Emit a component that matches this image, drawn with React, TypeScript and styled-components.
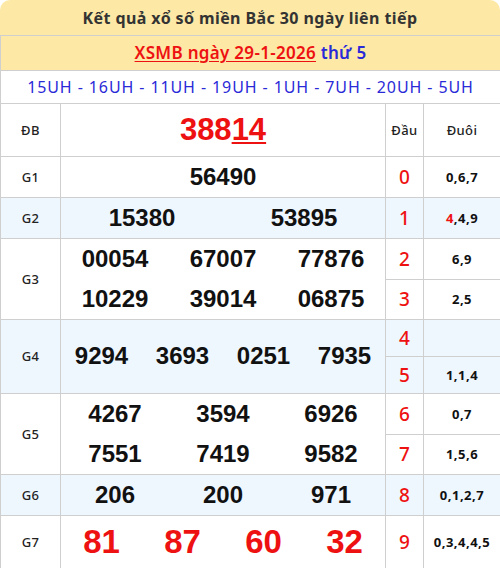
import React from "react";
import styled, { createGlobalStyle } from "styled-components";

const Global = createGlobalStyle`
  html, body { margin: 0; padding: 0; background: #fff; }
  body { font-family: "Noto Sans", "DejaVu Sans", sans-serif; }
`;

const YELLOW = "#fde9a5";
const BLUE_BG = "#eef6fe";
const LINE = "#cfcfcf";
const RED = "#ee1111";
const BLUE = "#2a2ad8";

const Wrap = styled.div`
  width: 500px;
`;

const Title = styled.div`
  height: 35px;
  background: ${YELLOW};
  border-radius: 10px 10px 0 0;
  border-bottom: 1px solid ${LINE};
  display: flex;
  align-items: center;
  justify-content: center;
  font-size: 16px;
  font-weight: 700;
  letter-spacing: 0.4px;
  color: #333;
`;

const Table = styled.table`
  width: 500px;
  border-collapse: collapse;
  table-layout: fixed;
`;

const Row = styled.tr<{ $alt?: boolean; $h: number }>`
  background: ${(p) => (p.$alt ? BLUE_BG : "#fff")};
  height: ${(p) => p.$h}px;
`;

const Cell = styled.td`
  border: 1px solid ${LINE};
  padding: 0;
  text-align: center;
  vertical-align: middle;
`;

const DateCell = styled(Cell)`
  background: ${YELLOW};
  border-top: none;
  font-size: 17px;
  font-weight: 600;
  letter-spacing: 0.3px;
`;

const DateLink = styled.span`
  color: ${RED};
  text-decoration: underline;
  text-underline-offset: 2px;
`;

const Weekday = styled.span`
  color: ${BLUE};
`;

const CodeCell = styled(Cell)`
  font-size: 16px;
  color: ${BLUE};
  letter-spacing: 0.9px;
`;

const Label = styled(Cell)`
  font-size: 13px;
  font-weight: 500;
  letter-spacing: 0.4px;
  color: #222;
`;

const HeadTitle = styled(Cell)`
  font-size: 13px;
  font-weight: 500;
  letter-spacing: 0.4px;
  color: #222;
`;

const Head = styled(Cell)`
  font-size: 19px;
  font-weight: 500;
  color: ${RED};
`;

const Tail = styled(Cell)`
  font-size: 13px;
  font-weight: 700;
  letter-spacing: 0.5px;
  color: #111;
`;

const Hl = styled.span`
  color: ${RED};
`;

const NumCell = styled(Cell)``;

const Line = styled.div<{ $h?: number }>`
  display: flex;
  align-items: center;
  height: ${(p) => (p.$h ? `${p.$h}px` : "auto")};
`;

const Num = styled.span<{ $size: number; $red?: boolean }>`
  flex: 1;
  text-align: center;
  font-family: "Liberation Sans", Arial, sans-serif;
  font-weight: 700;
  font-size: ${(p) => p.$size}px;
  color: ${(p) => (p.$red ? RED : "#111")};
`;

const Special = styled.span`
  font-family: "Liberation Sans", Arial, sans-serif;
  font-weight: 700;
  font-size: 31px;
  color: ${RED};
`;

const Under = styled.span`
  text-decoration: underline;
  text-decoration-thickness: 2px;
  text-underline-offset: 2px;
`;

const Nums = ({ items, size = 24, red, h }: { items: string[]; size?: number; red?: boolean; h?: number }) => (
  <Line $h={h}>
    {items.map((n, i) => (
      <Num key={i} $size={size} $red={red}>
        {n}
      </Num>
    ))}
  </Line>
);

export default function App() {
  return (
    <Wrap>
      <Global />
      <Title>Kết quả xổ số miền Bắc 30 ngày liên tiếp</Title>
      <Table>
        <colgroup>
          <col style={{ width: 60 }} />
          <col style={{ width: 325 }} />
          <col style={{ width: 38 }} />
          <col style={{ width: 77 }} />
        </colgroup>
        <tbody>
          <Row $h={34}>
            <DateCell colSpan={4}>
              <DateLink>XSMB ngày 29-1-2026</DateLink> <Weekday>thứ 5</Weekday>
            </DateCell>
          </Row>
          <Row $h={33}>
            <CodeCell colSpan={4}>15UH - 16UH - 11UH - 19UH - 1UH - 7UH - 20UH - 5UH</CodeCell>
          </Row>
          <Row $h={53}>
            <Label>ĐB</Label>
            <NumCell>
              <Special>
                388<Under>14</Under>
              </Special>
            </NumCell>
            <HeadTitle>Đầu</HeadTitle>
            <HeadTitle>Đuôi</HeadTitle>
          </Row>
          <Row $h={41}>
            <Label>G1</Label>
            <NumCell>
              <Nums items={["56490"]} />
            </NumCell>
            <Head>0</Head>
            <Tail>0,6,7</Tail>
          </Row>
          <Row $h={41} $alt>
            <Label>G2</Label>
            <NumCell>
              <Nums items={["15380", "53895"]} />
            </NumCell>
            <Head>1</Head>
            <Tail>
              <Hl>4</Hl>,4,9
            </Tail>
          </Row>
          <Row $h={41}>
            <Label rowSpan={2}>G3</Label>
            <NumCell rowSpan={2}>
              <Nums items={["00054", "67007", "77876"]} h={40} />
              <Nums items={["10229", "39014", "06875"]} h={40} />
            </NumCell>
            <Head>2</Head>
            <Tail>6,9</Tail>
          </Row>
          <Row $h={40}>
            <Head>3</Head>
            <Tail>2,5</Tail>
          </Row>
          <Row $h={37} $alt>
            <Label rowSpan={2}>G4</Label>
            <NumCell rowSpan={2}>
              <Nums items={["9294", "3693", "0251", "7935"]} />
            </NumCell>
            <Head>4</Head>
            <Tail />
          </Row>
          <Row $h={37} $alt>
            <Head>5</Head>
            <Tail>1,1,4</Tail>
          </Row>
          <Row $h={41}>
            <Label rowSpan={2}>G5</Label>
            <NumCell rowSpan={2}>
              <Nums items={["4267", "3594", "6926"]} h={40} />
              <Nums items={["7551", "7419", "9582"]} h={40} />
            </NumCell>
            <Head>6</Head>
            <Tail>0,7</Tail>
          </Row>
          <Row $h={40}>
            <Head>7</Head>
            <Tail>1,5,6</Tail>
          </Row>
          <Row $h={41} $alt>
            <Label>G6</Label>
            <NumCell>
              <Nums items={["206", "200", "971"]} />
            </NumCell>
            <Head>8</Head>
            <Tail>0,1,2,7</Tail>
          </Row>
          <Row $h={53}>
            <Label>G7</Label>
            <NumCell>
              <Nums items={["81", "87", "60", "32"]} size={33} red />
            </NumCell>
            <Head>9</Head>
            <Tail>0,3,4,4,5</Tail>
          </Row>
        </tbody>
      </Table>
    </Wrap>
  );
}
